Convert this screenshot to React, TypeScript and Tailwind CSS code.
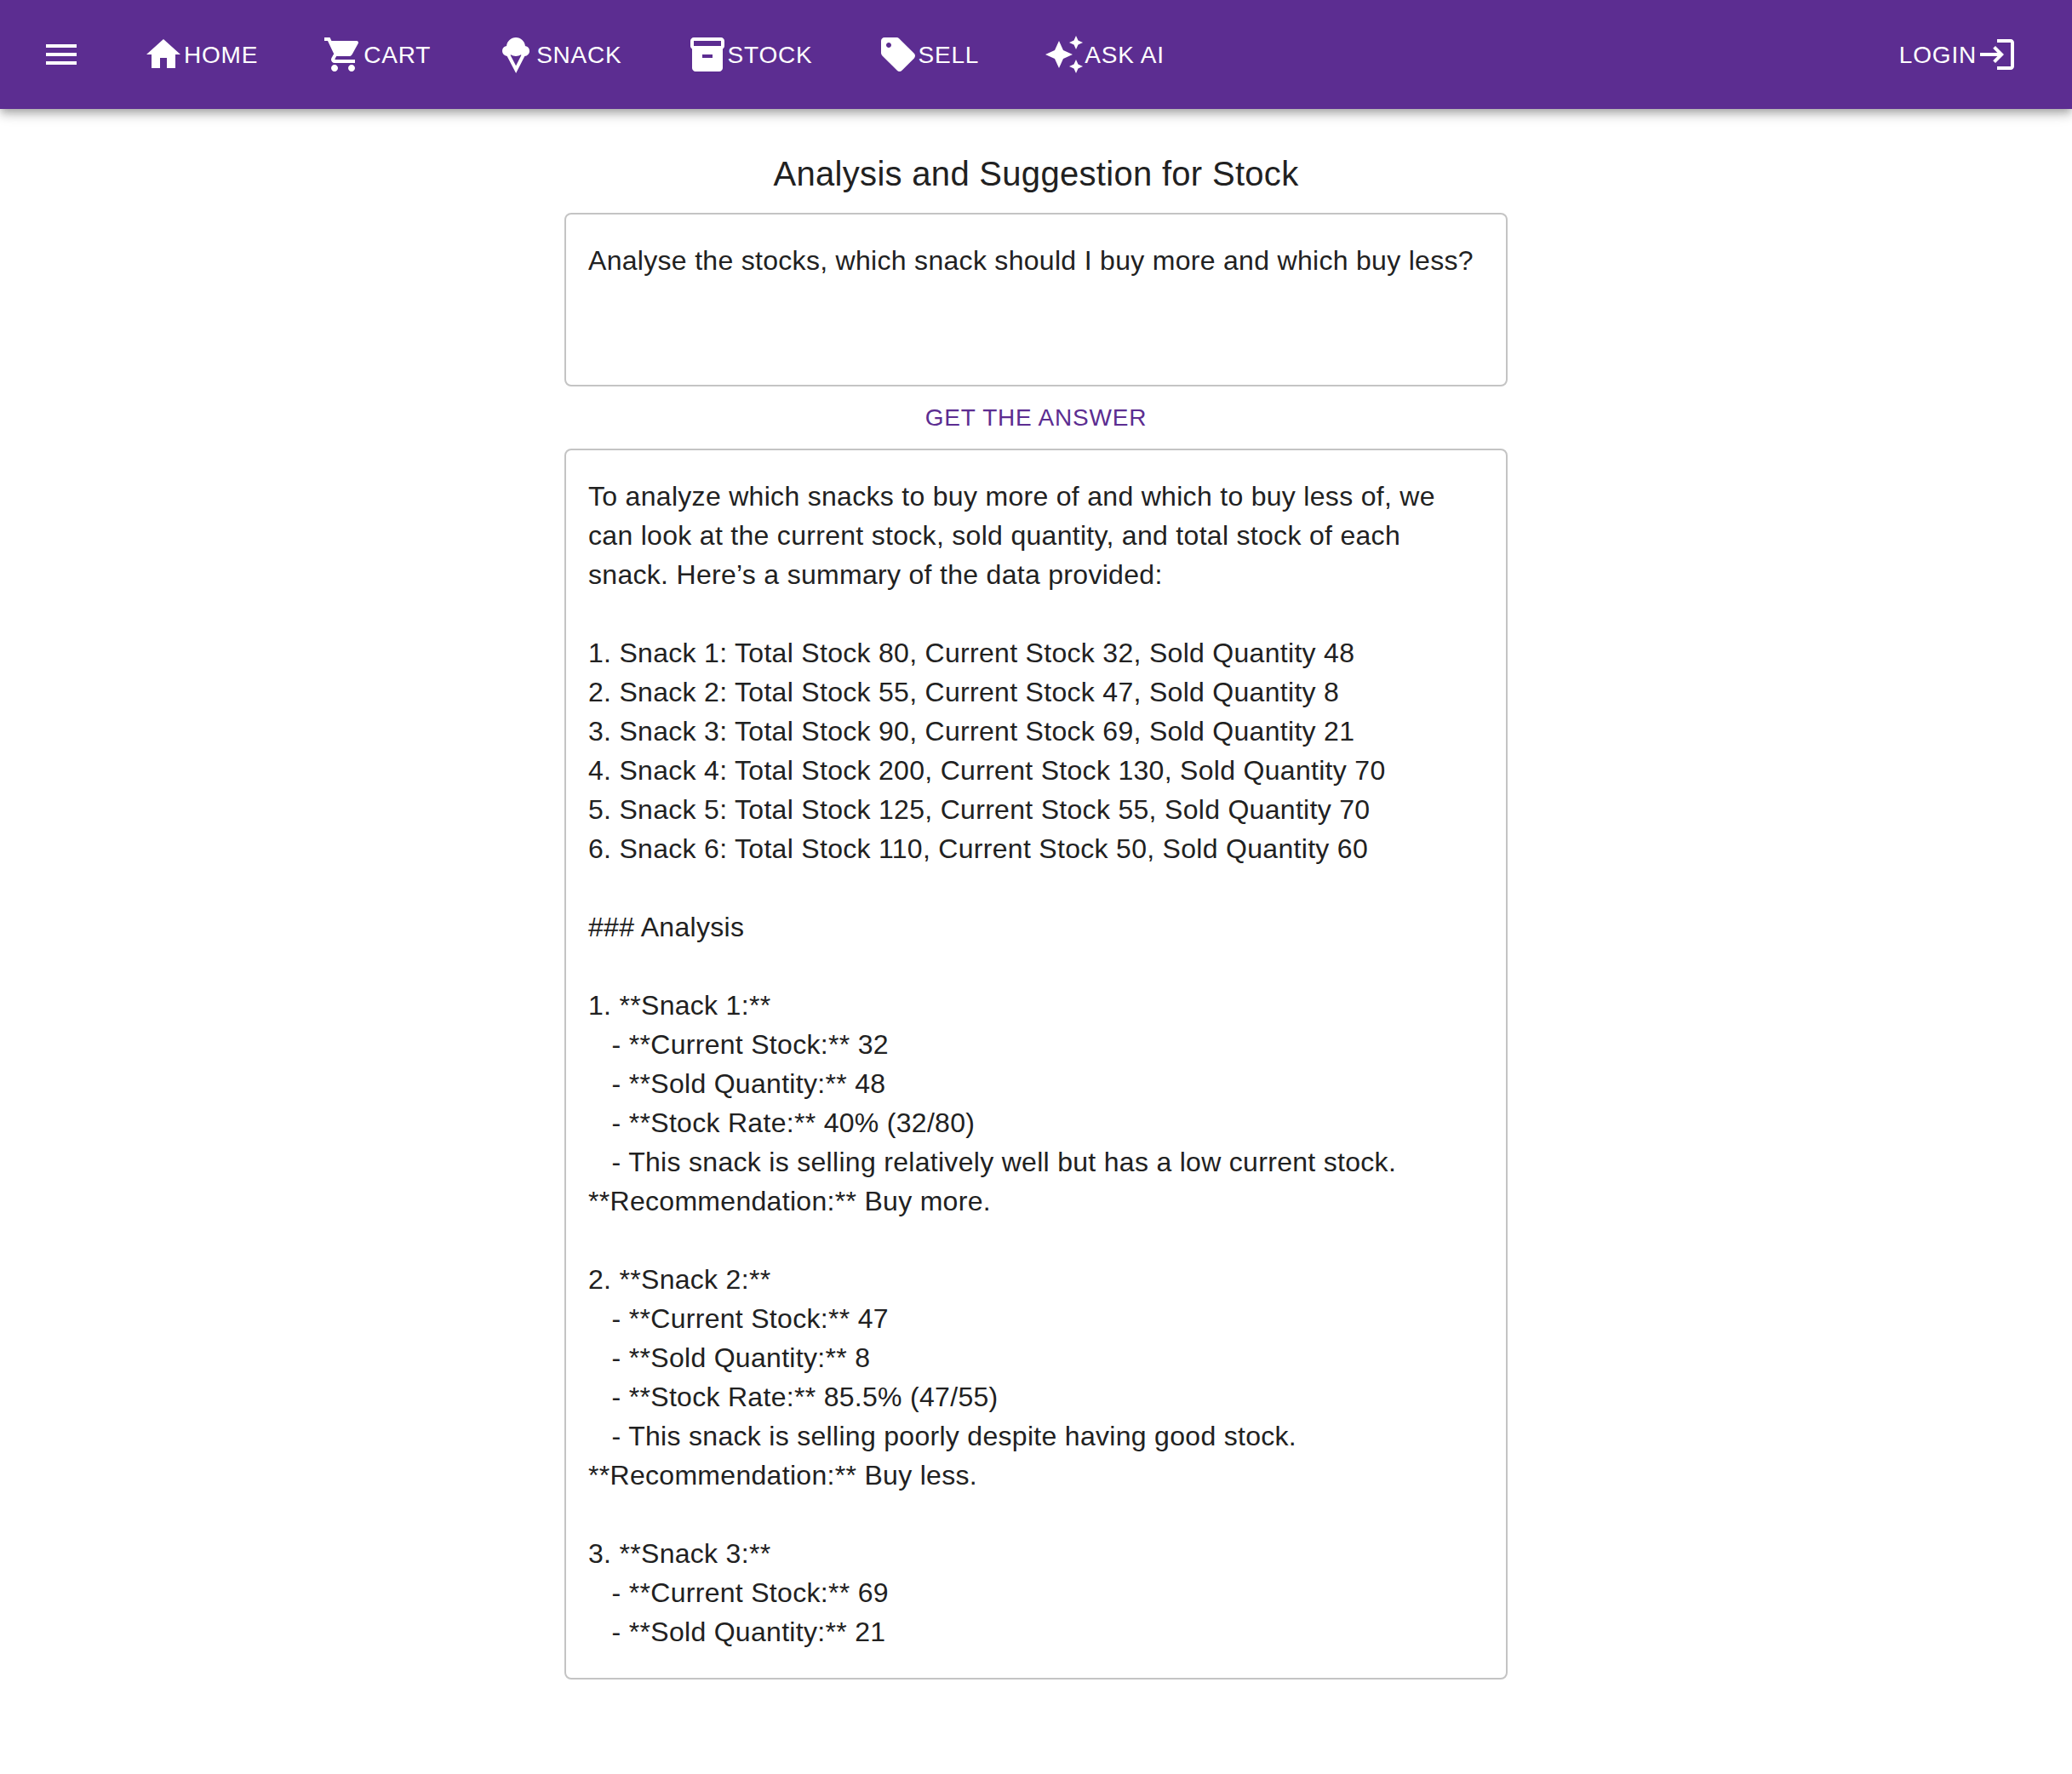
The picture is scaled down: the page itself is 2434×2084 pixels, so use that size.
import type { ReactNode } from "react";
import type { IconType } from "react-icons";
import {
  MdAutoAwesome,
  MdHome,
  MdIcecream,
  MdInventory2,
  MdLogin,
  MdMenu,
  MdSell,
  MdShoppingCart,
} from "react-icons/md";

const links: { label: string; Icon: IconType }[] = [
  { label: "HOME", Icon: MdHome },
  { label: "CART", Icon: MdShoppingCart },
  { label: "SNACK", Icon: MdIcecream },
  { label: "STOCK", Icon: MdInventory2 },
  { label: "SELL", Icon: MdSell },
  { label: "ASK AI", Icon: MdAutoAwesome },
];

const question =
  "Analyse the stocks, which snack should I buy more and which buy less?";

const answer = `To analyze which snacks to buy more of and which to buy less of, we can look at the current stock, sold quantity, and total stock of each snack. Here’s a summary of the data provided:

1. Snack 1: Total Stock 80, Current Stock 32, Sold Quantity 48
2. Snack 2: Total Stock 55, Current Stock 47, Sold Quantity 8
3. Snack 3: Total Stock 90, Current Stock 69, Sold Quantity 21
4. Snack 4: Total Stock 200, Current Stock 130, Sold Quantity 70
5. Snack 5: Total Stock 125, Current Stock 55, Sold Quantity 70
6. Snack 6: Total Stock 110, Current Stock 50, Sold Quantity 60

### Analysis

1. **Snack 1:**
   - **Current Stock:** 32
   - **Sold Quantity:** 48
   - **Stock Rate:** 40% (32/80)
   - This snack is selling relatively well but has a low current stock.
**Recommendation:** Buy more.

2. **Snack 2:**
   - **Current Stock:** 47
   - **Sold Quantity:** 8
   - **Stock Rate:** 85.5% (47/55)
   - This snack is selling poorly despite having good stock.
**Recommendation:** Buy less.

3. **Snack 3:**
   - **Current Stock:** 69
   - **Sold Quantity:** 21`;

function NavButton({ children }: { children: ReactNode }) {
  return (
    <button className="flex items-center px-4 py-3 text-[28px] leading-[49px] tracking-[0.02857em] whitespace-nowrap">
      {children}
    </button>
  );
}

function Field({ className, children }: { className: string; children: ReactNode }) {
  return (
    <div
      className={`w-[1108px] rounded-lg border-2 border-[#c4c4c4] px-[26px] py-[31px] text-[32px] leading-[46px] tracking-[0.00938em] whitespace-pre-wrap ${className}`}
    >
      {children}
    </div>
  );
}

export default function App() {
  return (
    <div className="min-h-[2084px] bg-white font-['Liberation_Sans',Arial,sans-serif] text-[#212121]">
      <header className="flex h-32 items-center bg-[#5c2d91] pr-12 pl-6 text-white shadow-[0px_4px_8px_-2px_rgba(0,0,0,0.2),0px_8px_10px_0px_rgba(0,0,0,0.14),0px_2px_20px_0px_rgba(0,0,0,0.12)]">
        <button className="mr-8 p-6" aria-label="menu">
          <MdMenu className="size-12" />
        </button>
        <nav className="flex flex-1 gap-11">
          {links.map(({ label, Icon }) => (
            <NavButton key={label}>
              <Icon className="size-12 shrink-0" />
              {label}
            </NavButton>
          ))}
        </nav>
        <NavButton>
          LOGIN
          <MdLogin className="size-12 shrink-0" />
        </NavButton>
      </header>
      <main className="flex flex-col items-center pt-11">
        <h1 className="mb-3.5 text-[40px] leading-[64px] tracking-[0.0075em]">
          Analysis and Suggestion for Stock
        </h1>
        <Field className="h-[204px]">{question}</Field>
        <button className="px-4 py-3 text-[28px] leading-[49px] tracking-[0.02857em] text-[#5c2d91]">
          GET THE ANSWER
        </button>
        <Field className="h-[1446px]">{answer}</Field>
      </main>
    </div>
  );
}
